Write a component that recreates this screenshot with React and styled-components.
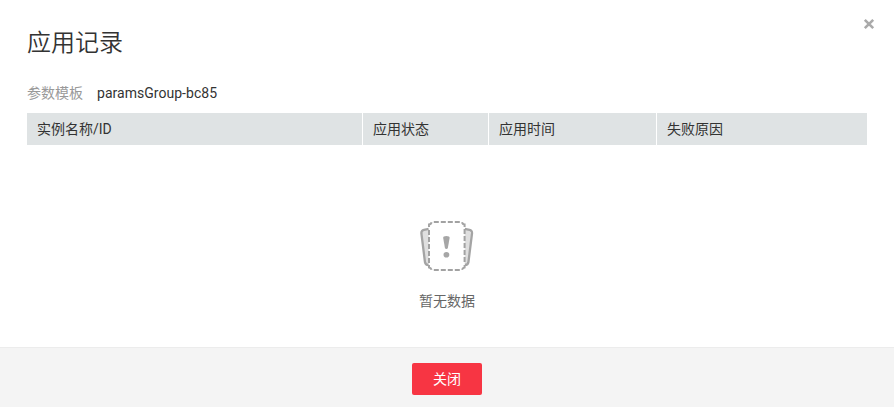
import React from "react";
import styled, { createGlobalStyle } from "styled-components";

const GlobalStyle = createGlobalStyle`
  * { box-sizing: border-box; }
  body {
    margin: 0;
    background: #fff;
    color: #333;
    font: 14px/20px Roboto, "Noto Sans CJK SC", sans-serif;
    overflow: hidden;
  }
`;

const Dialog = styled.section`
  position: relative;
  display: flex;
  flex-direction: column;
  width: 894px;
  height: 407px;
  background: #fff;
`;

const CloseIconButton = styled.button`
  position: absolute;
  top: 18px;
  right: 19px;
  width: 12px;
  height: 12px;
  padding: 0;
  border: 0;
  background: none;
  svg { display: block; }
`;

const Body = styled.div`
  flex: 1;
  display: flex;
  flex-direction: column;
  padding: 24px 27px 0;
`;

const Title = styled.h1`
  margin: 0;
  height: 36px;
  font-size: 24px;
  line-height: 38px;
  font-weight: 350;
`;

const Field = styled.div`
  display: flex;
  gap: 14px;
  margin-top: 23px;
  height: 30px;
`;

const Label = styled.span`
  color: #999;
`;

const Value = styled.span`
  color: #333;
  letter-spacing: 0.03px;
`;

const HeaderRow = styled.div`
  display: grid;
  grid-template-columns: 336px 126px 168px 210px;
  height: 32px;
  background: #dfe3e4;
`;

const HeaderCell = styled.div`
  padding: 0 10px;
  line-height: 32px;
  border-right: 1px solid #fff;
  &:last-child { border-right: 0; }
`;

const Empty = styled.div`
  display: flex;
  flex-direction: column;
  align-items: center;
  padding-top: 75px;
  color: #666;
  svg { display: block; }
`;

const EmptyText = styled.span`
  margin-top: 19px;
`;

const Footer = styled.footer`
  display: flex;
  justify-content: center;
  height: 60px;
  padding-top: 15px;
  background: #f4f4f4;
  border-top: 1px solid #ececec;
`;

const PrimaryButton = styled.button`
  width: 70px;
  height: 32px;
  padding: 0;
  border: 0;
  border-radius: 2px;
  background: #f73543;
  color: #fff;
  font: inherit;
`;

const columns = ["实例名称/ID", "应用状态", "应用时间", "失败原因"];

function EmptyIcon() {
  return (
    <svg width="54" height="52" viewBox="0 0 54 52" fill="none">
      <path d="M9 9 4 10 2 14 5 42 9 45ZM44 9l5 1 2 4-3 28-4 3Z" fill="#dfdfdf" />
      <path
        d="M8.8 8.9 4 9.8Q1.2 10.5 1.4 13.5L5 42.3Q5.5 45.2 8.8 45M44.7 8.9l4.8.9q2.8.7 2.5 3.7L48.4 42.3q-.5 2.9-3.8 2.7"
        stroke="#a4a4a4"
        strokeWidth="2.3"
      />
      <path
        d="M11.6 2h30.2l2.9 3v42.2l-2.9 3H11.6l-2.9-3V5Z"
        fill="#fff"
      />
      <path
        d="M13.8 2h26M44.6 9v35M39.8 50h-26M9 43V9"
        stroke="#a2a2a2"
        strokeWidth="2"
        strokeDasharray="5 2"
      />
      <path
        d="M9 7V4.4q2 0 2.6-2.2M42 2.2q.6 2.2 2.6 2.2V7M44.6 45v2.4q-2 .2-2.6 2.4M11.6 49.8Q11 47.6 9 47.4V45"
        stroke="#a4a4a4"
        strokeWidth="2"
      />
      <path d="M23.2 18Q23 16.1 26.4 16.1T29.6 18l-1.7 9.8q-.3 1.2-1.5 1.2t-1.5-1.2Z" fill="#a6a6a6" />
      <ellipse cx="26.4" cy="34.7" rx="2.9" ry="2.8" fill="#a6a6a6" />
    </svg>
  );
}

export default function App() {
  return (
    <>
      <GlobalStyle />
      <Dialog role="dialog" aria-labelledby="dialog-title">
        <CloseIconButton aria-label="关闭">
          <svg width="12" height="12" viewBox="0 0 12 12">
            <path d="m1.8 1.8 8.4 8.4m0-8.4-8.4 8.4" stroke="#aaa" strokeWidth="2.6" />
          </svg>
        </CloseIconButton>
        <Body>
          <Title id="dialog-title">应用记录</Title>
          <Field>
            <Label>参数模板</Label>
            <Value>paramsGroup-bc85</Value>
          </Field>
          <HeaderRow>
            {columns.map((name) => (
              <HeaderCell key={name}>{name}</HeaderCell>
            ))}
          </HeaderRow>
          <Empty>
            <EmptyIcon />
            <EmptyText>暂无数据</EmptyText>
          </Empty>
        </Body>
        <Footer>
          <PrimaryButton>关闭</PrimaryButton>
        </Footer>
      </Dialog>
    </>
  );
}
